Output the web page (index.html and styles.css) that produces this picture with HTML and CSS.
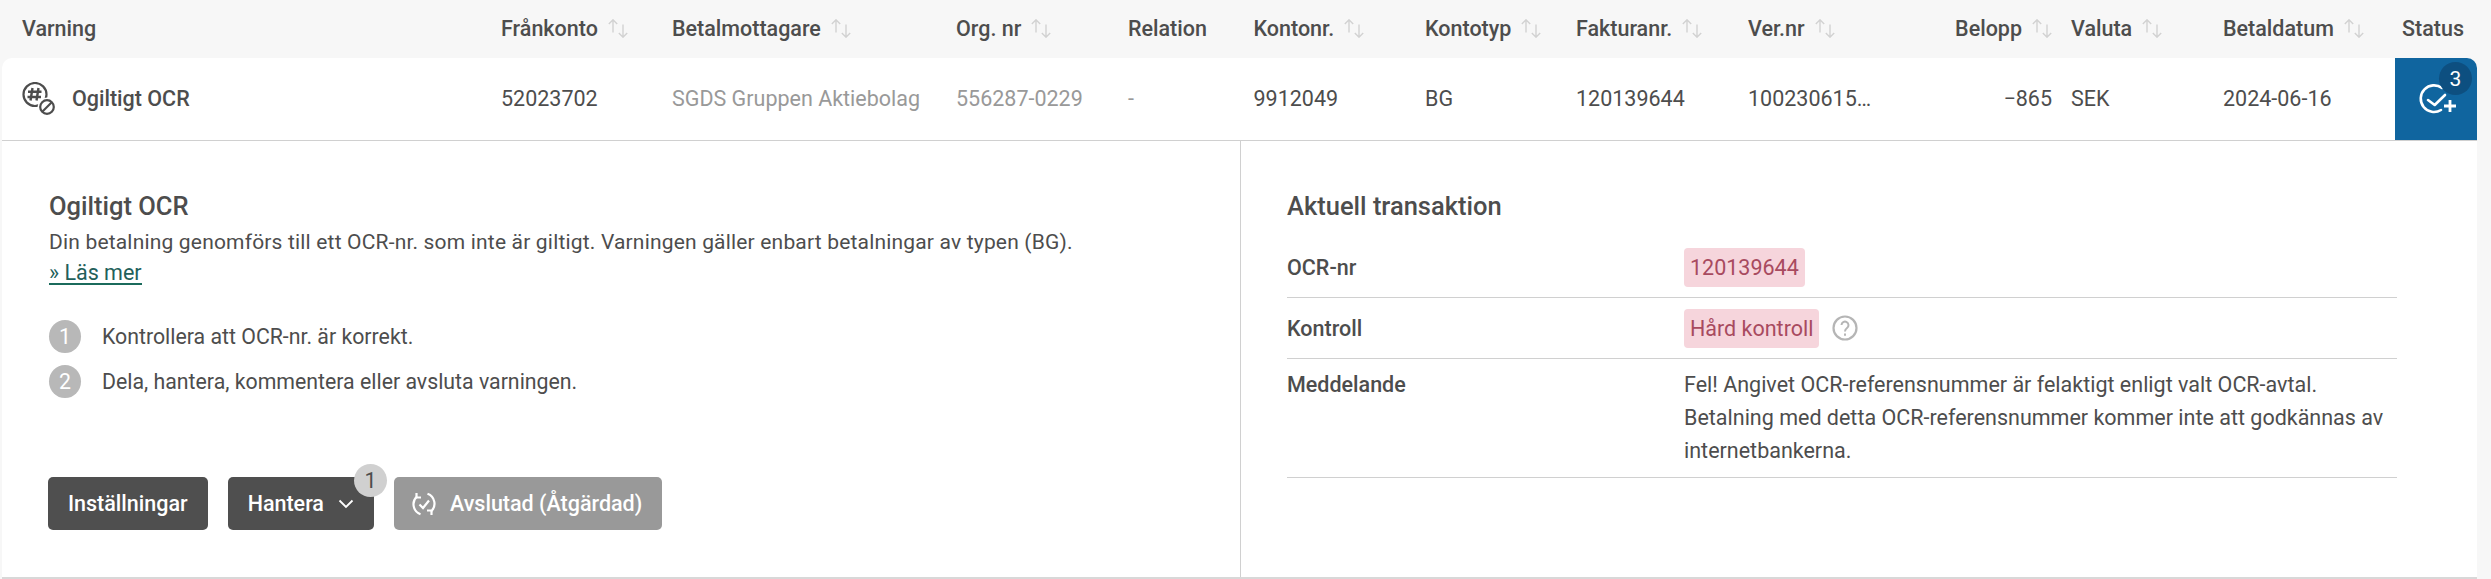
FILE: index.html
```html
<!DOCTYPE html>
<html lang="sv">
<head>
<meta charset="utf-8">
<title>Varningar</title>
<link rel="stylesheet" href="styles.css">
</head>
<body>
<svg class="defs" width="0" height="0" aria-hidden="true">
  <symbol id="sort" viewBox="0 0 20 19">
    <path d="M5 13.500V.800M.800 5 5 .800 9.200 5M15 5.500v12.700M10.800 14 15 18.200 19.200 14" fill="none" stroke="currentColor" stroke-width="1.400"/>
  </symbol>
</svg>
<main class="table">
  <div class="cols head">
    <div class="th">Varning</div>
    <div class="th">Frånkonto<svg class="sort"><use href="#sort"/></svg></div>
    <div class="th">Betalmottagare<svg class="sort"><use href="#sort"/></svg></div>
    <div class="th">Org. nr<svg class="sort"><use href="#sort"/></svg></div>
    <div class="th">Relation</div>
    <div class="th">Kontonr.<svg class="sort"><use href="#sort"/></svg></div>
    <div class="th">Kontotyp<svg class="sort"><use href="#sort"/></svg></div>
    <div class="th">Fakturanr.<svg class="sort"><use href="#sort"/></svg></div>
    <div class="th">Ver.nr<svg class="sort"><use href="#sort"/></svg></div>
    <div class="th end">Belopp<svg class="sort"><use href="#sort"/></svg></div>
    <div class="th">Valuta<svg class="sort"><use href="#sort"/></svg></div>
    <div class="th">Betaldatum<svg class="sort"><use href="#sort"/></svg></div>
    <div class="th status-head">Status</div>
  </div>
  <section class="card">
    <div class="cols row">
      <div class="td name">
        <svg class="warn-icon" viewBox="0 0 33 33" fill="none" stroke="#4d4d4d">
          <circle cx="13" cy="12.500" r="11.500" stroke-width="2.200"/>
          <path d="M10.500 6 8.500 18.500M16.500 6l-2 12.500M6 9.800h13.500M5.500 15H19" stroke-width="2.400"/>
          <circle cx="25" cy="25" r="9.500" fill="#fff" stroke="none"/>
          <circle cx="25" cy="25" r="6.800" stroke-width="2.200"/>
          <path d="m29.500 20.500-9 9" stroke-width="2.200"/>
        </svg>
        <span>Ogiltigt OCR</span>
      </div>
      <div class="td">52023702</div>
      <div class="td muted">SGDS Gruppen Aktiebolag</div>
      <div class="td muted">556287-0229</div>
      <div class="td muted">-</div>
      <div class="td">9912049</div>
      <div class="td">BG</div>
      <div class="td">120139644</div>
      <div class="td">100230615…</div>
      <div class="td end">−865</div>
      <div class="td">SEK</div>
      <div class="td">2024-06-16</div>
      <div class="status">
        <svg class="status-icon" viewBox="0 0 40 40" fill="none" stroke="#fff" stroke-width="2.600">
          <path d="M26 9A13.300 13.300 0 1 0 25 31" stroke-linecap="round"/>
          <path d="m12 21 6.700 5L29 16" stroke-linecap="round" stroke-linejoin="round"/>
          <path d="M34 21v12M28 27h12" stroke-width="2.800"/>
        </svg>
        <span class="status-badge">3</span>
      </div>
    </div>
    <div class="detail">
      <div class="info">
        <h2 class="title">Ogiltigt OCR</h2>
        <p class="desc">Din betalning genomförs till ett OCR-nr. som inte är giltigt. Varningen gäller enbart betalningar av typen (BG).</p>
        <a class="more" href="#">» Läs mer</a>
        <ol class="steps">
          <li class="step"><span class="num">1</span>Kontrollera att OCR-nr. är korrekt.</li>
          <li class="step"><span class="num">2</span>Dela, hantera, kommentera eller avsluta varningen.</li>
        </ol>
        <div class="actions">
          <button class="btn" type="button">Inställningar</button>
          <button class="btn manage" type="button">Hantera
            <svg class="chev" viewBox="0 0 16 10" fill="none" stroke="#fff" stroke-width="1.800"><path d="m1.500 1.500 6.500 6.500 6.500-6.500"/></svg>
            <span class="count">1</span>
          </button>
          <button class="btn off" type="button">
            <svg class="done" viewBox="0 0 24 24" fill="none" stroke="#fff" stroke-width="2.200">
              <path d="M8.500 22.200A10.500 10.500 0 0 1 5 4.500M15.500 1.800A10.500 10.500 0 0 1 19 19.500"/>
              <path d="M4.500 1v4.500H9M19.500 23v-4.500H15"/>
              <path d="m7.500 12.500 3.500 3.500 6-7.500"/>
            </svg>
            Avslutad (Åtgärdad)
          </button>
        </div>
      </div>
      <div class="trans">
        <h2 class="title">Aktuell transaktion</h2>
        <div class="kv first">
          <div class="key">OCR-nr</div>
          <div class="val"><span class="pill">120139644</span></div>
        </div>
        <div class="kv">
          <div class="key">Kontroll</div>
          <div class="val"><span class="pill">Hård kontroll</span>
            <svg class="help" viewBox="0 0 26 26" fill="none" stroke="#b5b5b5"><circle cx="13" cy="13" r="11.500" stroke-width="2.200"/><path d="M9.500 10a3.500 3.500 0 1 1 5.500 3c-1.400 1-2 1.600-2 3.500" stroke-width="2"/><path d="M13 18.500v2.200" stroke-width="2"/></svg>
          </div>
        </div>
        <div class="kv msg">
          <div class="key">Meddelande</div>
          <div class="val text">Fel! Angivet OCR-referensnummer är felaktigt enligt valt OCR-avtal.<br>Betalning med detta OCR-referensnummer kommer inte att godkännas av<br>internetbankerna.</div>
        </div>
      </div>
    </div>
  </section>
</main>
</body>
</html>
```

FILE: styles.css
```css
* { box-sizing: border-box; }
html, body { margin: 0; height: 100%; }
body {
  background: #f7f7f7;
  color: #4d4d4d;
  font-family: Roboto, "Liberation Sans", sans-serif;
  font-size: 21.500px;
  overflow: hidden;
}
.defs { position: absolute; }
.table { width: 2477px; padding-left: 2px; }
.cols {
  display: grid;
  grid-template-columns: 499px 171px 284px 172px 125.500px 171.500px 151px 172px 190px 133px 152px 172px 82px;
}
.head { height: 58px; align-items: center; padding-bottom: 2px; }
.th { display: flex; align-items: center; font-weight: 500; white-space: nowrap; }
.th:first-child, .td:first-child { padding-left: 20px; }
.th.end, .td.end { justify-content: flex-end; padding-right: 19px; }
.status-head { padding-left: 7px; }
.sort { width: 20px; height: 19px; margin-left: 10px; color: #d2d2d2; flex: none; }
.card {
  background: #fff;
  border-radius: 10px 10px 0 0;
  border-bottom: 2px solid #d8d8d8;
  height: 521px;
}
.row { height: 83px; border-bottom: 1px solid #d0d0d0; }
.td { display: flex; align-items: center; white-space: nowrap; padding-bottom: 1px; }
.muted { color: #999; }
.name { font-weight: 500; gap: 17px; }
.warn-icon { width: 33px; height: 33px; flex: none; }
.status {
  position: relative;
  background: #10659f;
  border-radius: 0 10px 0 0;
  display: flex;
  align-items: center;
  justify-content: center;
}
.status-icon { width: 40px; height: 40px; overflow: visible; }
.status-badge {
  position: absolute;
  top: 4px;
  right: 5px;
  width: 33px;
  height: 33px;
  border-radius: 50%;
  background: #0d4f80;
  color: #fff;
  font-size: 21px;
  display: flex;
  align-items: center;
  justify-content: center;
}
.detail { display: grid; grid-template-columns: 1239px 1fr; height: 436px; }
.info { padding: 49px 0 0 47px; border-right: 1px solid #d0d0d0; }
.trans { padding: 49px 80px 0 46px; }
.title { margin: 0; font-size: 25.500px; line-height: 32px; font-weight: 500; }
.desc { margin: 4px 0 0; line-height: 33px; font-size: 21px; letter-spacing: .18px; }
.more {
  display: block;
  width: fit-content;
  color: #22605a;
  text-decoration: none;
  line-height: 21px;
  border-bottom: 2px solid #1b6b5c;
  margin-top: 3px;
}
.steps { list-style: none; margin: 35px 0 0; padding: 0; font-size: 21.300px; }
.step { display: flex; align-items: center; height: 33px; }
.step + .step { margin-top: 12px; }
.num {
  width: 32px;
  height: 33px;
  border-radius: 50%;
  background: #b8b8b8;
  color: #fff;
  margin-right: 21px;
  display: flex;
  align-items: center;
  justify-content: center;
}
.actions { display: flex; gap: 20px; margin: 79px 0 0 -1px; }
.btn {
  position: relative;
  height: 53px;
  padding: 0 20px;
  background: #4f4f4f;
  color: #fff;
  border: 0;
  border-radius: 5px;
  font: inherit;
  font-weight: 500;
  display: flex;
  align-items: center;
}
.manage { gap: 14px; }
.chev { width: 16px; height: 10px; }
.count {
  position: absolute;
  top: -13px;
  right: -13px;
  width: 33px;
  height: 33px;
  border-radius: 50%;
  background: #d0d0d0;
  color: #4d4d4d;
  font-weight: 400;
  display: flex;
  align-items: center;
  justify-content: center;
}
.off { background: #999; gap: 14px; padding-left: 18px; }
.done { width: 24px; height: 24px; flex: none; }
.kv {
  display: grid;
  grid-template-columns: 397px 1fr;
  align-items: center;
  border-bottom: 1px solid #d0d0d0;
  height: 61px;
}
.kv.first { margin-top: 16px; height: 60px; }
.key { font-weight: 500; }
.val { display: flex; align-items: center; gap: 13px; }
.pill {
  background: #f6d5dc;
  color: #a84a5f;
  border-radius: 4px;
  padding: 0 6px;
  line-height: 39px;
}
.help { width: 26px; height: 26px; }
.kv.msg { align-items: start; height: 119px; padding-top: 9px; }
.kv.msg .key { line-height: 33px; }
.text { display: block; line-height: 33px; }
```
